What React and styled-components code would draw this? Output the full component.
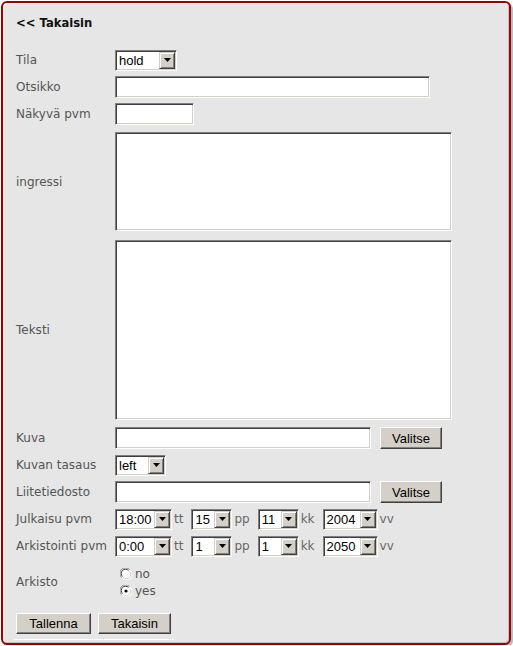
import React from 'react';
import styled, { createGlobalStyle } from 'styled-components';

const GlobalStyle = createGlobalStyle`
  html, body {
    margin: 0;
    padding: 0;
    background: #fff;
  }
`;

const Frame = styled.div`
  box-sizing: border-box;
  width: 510px;
  height: 644px;
  margin: 1px 0 0 1px;
  padding: 13px 0 0 13px;
  background: #e6e6e6;
  border: 2px solid #9c0000;
  border-radius: 6px;
  box-shadow: 2px 2px 0 #b4c0c8, inset 1px 1px 0 #fbfbfb, inset -1px -1px 0 #c4c4c4;
  font-family: 'DejaVu Sans', Verdana, sans-serif;
`;

const BackLink = styled.div`
  font-size: 11.6px;
  font-weight: bold;
  line-height: 14px;
  color: #111;
  margin-bottom: 19px;
`;

const Form = styled.div`
  display: grid;
  grid-template-columns: 99px 1fr;
  row-gap: 5px;
  align-items: center;
`;

const Label = styled.div`
  font-size: 12px;
  color: #555;
  line-height: 14px;
`;

const Field = styled.div`
  display: flex;
  align-items: center;
  min-height: 22px;
`;

const TextInput = styled.input`
  box-sizing: border-box;
  width: ${p => p.$w}px;
  height: 22px;
  margin: 0;
  padding: 1px 3px;
  background: #fff;
  border: 1px solid;
  border-color: #808080 #fff #fff #808080;
  box-shadow: inset 1px 1px 0 #404040, inset -1px -1px 0 #d4d0c8;
  font: 13px 'Liberation Sans', Arial, sans-serif;
  outline: none;
`;

const TextArea = styled.textarea`
  display: block;
  box-sizing: border-box;
  width: 337px;
  height: ${p => p.$h}px;
  margin: 2px 0;
  padding: 2px;
  resize: none;
  background: #fff;
  border: 1px solid;
  border-color: #808080 #fff #fff #808080;
  box-shadow: inset 1px 1px 0 #404040, inset -1px -1px 0 #d4d0c8;
  font: 13px 'Liberation Sans', Arial, sans-serif;
  outline: none;
`;

const SelectBox = styled.div`
  box-sizing: border-box;
  display: flex;
  width: ${p => p.$w}px;
  height: 21px;
  padding: 1px;
  background: #fff;
  border: 1px solid;
  border-color: #808080 #fff #fff #808080;
  box-shadow: inset 1px 1px 0 #404040, inset -1px -1px 0 #d4d0c8;
`;

const SelectValue = styled.span`
  flex: 1;
  padding-left: 2px;
  font: 13px 'Liberation Sans', Arial, sans-serif;
  line-height: 17px;
  color: #000;
  white-space: nowrap;
  overflow: hidden;
`;

const ArrowButton = styled.span`
  box-sizing: border-box;
  display: flex;
  align-items: center;
  justify-content: center;
  width: 16px;
  height: 17px;
  background: #d4d0c8;
  border: 1px solid;
  border-color: #d4d0c8 #404040 #404040 #d4d0c8;
  box-shadow: inset 1px 1px 0 #fff, inset -1px -1px 0 #808080;
`;

const Unit = styled.span`
  font-size: 12px;
  color: #666;
  margin: 0 8px 0 2px;
`;

const Button = styled.button`
  box-sizing: border-box;
  height: ${p => p.$h || 21}px;
  width: ${p => p.$w}px;
  margin: 0;
  padding: 0;
  background: #d4d0c8;
  border: 1px solid;
  border-color: #fff #404040 #404040 #fff;
  box-shadow: inset -1px -1px 0 #808080;
  font: 13px 'Liberation Sans', Arial, sans-serif;
  color: #000;
`;

const PickButton = styled(Button)`
  margin-left: 9px;
`;

const RadioGroup = styled.div`
  display: flex;
  flex-direction: column;
  padding: 3px 0 2px 5px;
`;

const RadioItem = styled.label`
  display: flex;
  align-items: center;
  gap: 3px;
  height: 17px;
  font-size: 12px;
  color: #555;
`;

const ButtonRow = styled.div`
  display: flex;
  gap: 7px;
  width: fit-content;
  margin: 12px 0 0 -2px;
  padding: 0 3px 5px 2px;
  border-bottom: 1px solid #fff;
`;

function Select({ value, w }) {
  return (
    <SelectBox $w={w}>
      <SelectValue>{value}</SelectValue>
      <ArrowButton>
        <svg width="7" height="4" viewBox="0 0 7 4">
          <path d="M0 0h7L3.5 4z" fill="#000" />
        </svg>
      </ArrowButton>
    </SelectBox>
  );
}

function Radio({ checked }) {
  return (
    <svg width="12" height="12" viewBox="0 0 12 12">
      <circle cx="6" cy="6" r="5.5" fill="#fff" />
      <path d="M1.5 9.5A5.5 5.5 0 0 1 9.5 1.5" fill="none" stroke="#808080" />
      <path d="M2.5 8.5A4.2 4.2 0 0 1 8.5 2.5" fill="none" stroke="#404040" />
      <path d="M10.5 2.5A5.5 5.5 0 0 1 2.5 10.5" fill="none" stroke="#fff" />
      <path d="M9.5 3.5A4.2 4.2 0 0 1 3.5 9.5" fill="none" stroke="#d4d0c8" />
      {checked && <circle cx="6" cy="6" r="1.6" fill="#000" />}
    </svg>
  );
}

function DateRow({ values }) {
  const widths = [57, 41, 41, 55];
  const units = ['tt', 'pp', 'kk', 'vv'];
  return (
    <Field>
      {values.map((v, i) => (
        <React.Fragment key={i}>
          <Select value={v} w={widths[i]} />
          <Unit>{units[i]}</Unit>
        </React.Fragment>
      ))}
    </Field>
  );
}

export default function App() {
  return (
    <>
      <GlobalStyle />
      <Frame>
        <BackLink>&lt;&lt; Takaisin</BackLink>
        <Form>
          <Label>Tila</Label>
          <Field><Select value="hold" w={62} /></Field>

          <Label>Otsikko</Label>
          <Field><TextInput $w={315} /></Field>

          <Label>Näkyvä pvm</Label>
          <Field><TextInput $w={79} /></Field>

          <Label>ingressi</Label>
          <TextArea $h={99} />

          <Label>Teksti</Label>
          <TextArea $h={180} />

          <Label>Kuva</Label>
          <Field>
            <TextInput $w={256} />
            <PickButton $w={62} $h={22}>Valitse</PickButton>
          </Field>

          <Label>Kuvan tasaus</Label>
          <Field><Select value="left" w={51} /></Field>

          <Label>Liitetiedosto</Label>
          <Field>
            <TextInput $w={256} />
            <PickButton $w={62} $h={22}>Valitse</PickButton>
          </Field>

          <Label>Julkaisu pvm</Label>
          <DateRow values={['18:00', '15', '11', '2004']} />

          <Label>Arkistointi pvm</Label>
          <DateRow values={['0:00', '1', '1', '2050']} />

          <Label>Arkisto</Label>
          <RadioGroup>
            <RadioItem><Radio />no</RadioItem>
            <RadioItem><Radio checked />yes</RadioItem>
          </RadioGroup>
        </Form>
        <ButtonRow>
          <Button $w={75}>Tallenna</Button>
          <Button $w={73}>Takaisin</Button>
        </ButtonRow>
      </Frame>
    </>
  );
}
